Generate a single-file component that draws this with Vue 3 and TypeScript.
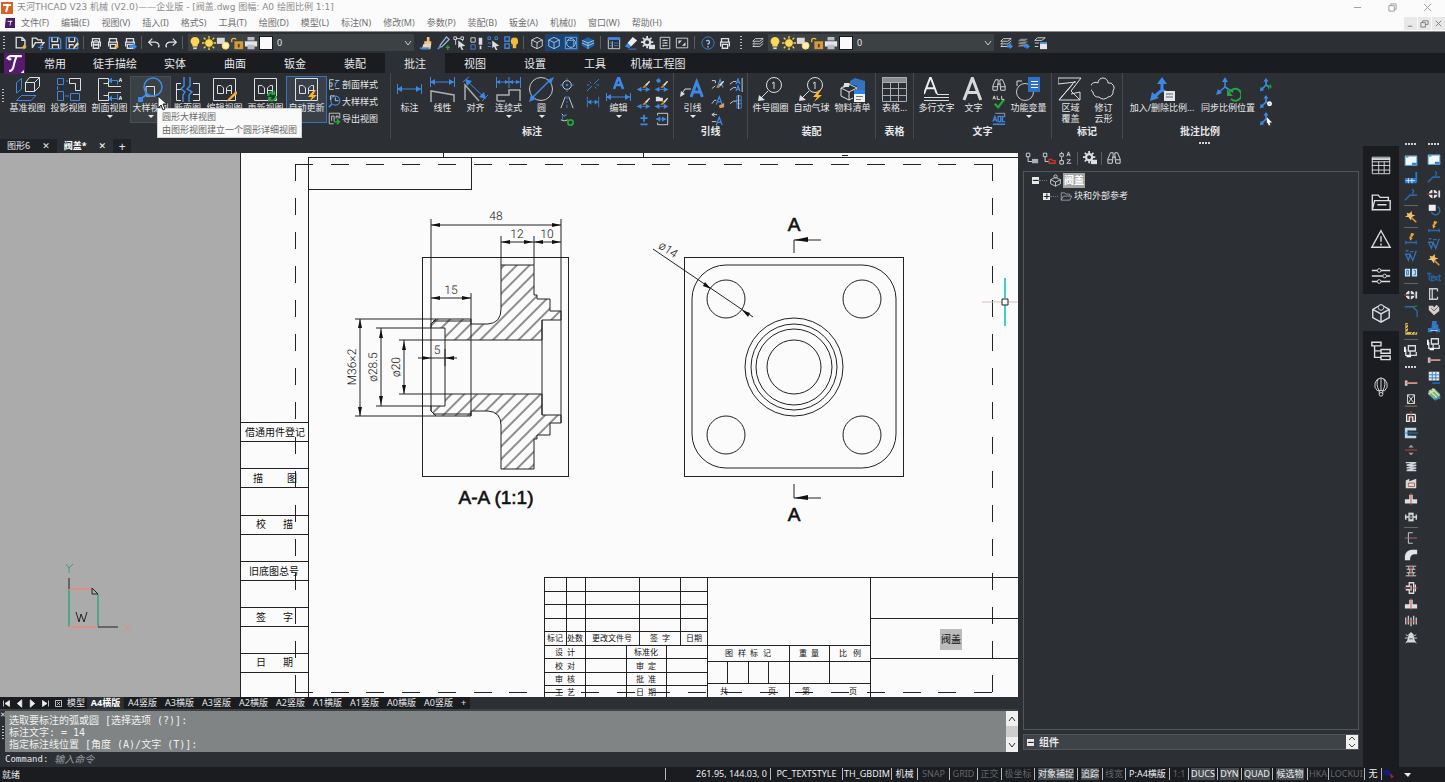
<script setup lang="ts">
import { ref } from 'vue'

const W = '#dcdfe2'
const B = '#3d88e4'
const Y = '#f5b83a'
const G = '#22a838'
const R = '#c8493c'

const ln = (d: string, c = W, w = 1): string =>
  `<path d="${d}" fill="none" stroke="${c}" stroke-width="${w}"/>`
const fl = (d: string, c = W): string => `<path d="${d}" fill="${c}"/>`
const ci = (x: number, y: number, r: number, c = W, f = 'none', w = 1): string =>
  `<circle cx="${x}" cy="${y}" r="${r}" stroke="${c}" fill="${f}" stroke-width="${w}"/>`

const bolt = fl('M20 13L14 20H18L15 25L23 18H19L22 13Z', '#fbb62c')
const harrow = (y: number, a: number, b: number): string =>
  ln(`M${a} ${y}H${b}`, B, 1) + fl(`M${a} ${y}l5 -3v6zM${b} ${y}l-5 -3v6z`, B)
const letterA = (x: number, y: number, s: number, c = B, w = 1.5): string =>
  ln(`M${x} ${y + s}L${x + s * 0.38} ${y}L${x + s * 0.76} ${y + s}M${x + s * 0.14} ${y + s * 0.66}H${x + s * 0.62}`, c, w)
const brush = fl('M9 8L14 3L15 4L11 9Z', '#f0dcc0') + fl('M9 8L11 9L9 11H6Z', '#e08a28')
const sheet = ln('M1.500 1.500H23.500V23.500H1.500Z') + ln('M5.500 16.500V8.500H9L11.500 11V16.500ZM14.500 17V11L17 8.500H19.500V17M14.500 13.500H19.500')
const layers = ln('M5 3H14L10 6H2ZM4 7.500L2 9H10L14 5.500M4 10.500L2 12H10L14 8.500', W)
const printer = ln('M4 7V3H12V7M3 12V7H13V12M5 9.500H11V14H5Z', W, 1.500)
const cube = ln('M8 1.500L14 4.500V11.500L8 14.500L2 11.500V4.500ZM2 4.500L8 7.500L14 4.500M8 7.500V14.500')
const scale = (c = B): string => ln('M8 3V8L3 13M8 8L12 10', c, 2) + fl('M8 0L11 4H5ZM1 15L2 10L6 14Z', c)

const big: Record<string, string> = {
  base: ln('M10.500 5.500L14.500 .500H24.500V9.500L19.500 14.500H10.500ZM10.500 5.500H19.500V14.500M19.500 5.500L24.500 .500') + ln('M6.500 1.500V12L1.500 16V5.500ZM6.500 18.500H21L16 23.500H1.500Z', B),
  proj: ln('M13.500 1.500H24.500V13.500H19.500V6.500H13.500Z') + ln('M1.500 1.500H7.500V7.500H1.500ZM1.500 14.500H7.500V23.500H1.500ZM14.500 16.500H23.500V23.500H14.500Z', B) + ln('M1.500 9V13M10 4H12M9 19H13', B),
  sect: ln('M1.500 1.500V23.500H11.500V18.500H6.500M1.500 1.500H11.500V6.500M6.500 6.500H11.500V9.500H24M11.500 18.500V15.500H24') + ln('M14 3.500H20.500V7.500M20.500 23V17M14 21.500H20.500', B) + fl('M11 3.500l4 -3v6zM11 21.500l4 -3v6z', B) + letterA(22, 1, 4, W, 1) + letterA(22, 19, 4, W, 1),
  detail: ln('M8 9.500H16.500V19M8 9.500V19H17') + ci(15, 10, 9, B, 'none', 1.5) + ln('M9 17L3 22', B, 2) + fl('M0 20H5V25H0Z', B),
  brk: ln('M6 6.500H1.500V23.500H6M18 6.500H24.500V23.500H18M1.500 12.500H6M18 17.500H24') + ln('M9 0V9L6 12L10 15L8 18V25M15 0V9L12 12L17 15L14 18V25', B, 1.500),
  edit: sheet + fl('M24 14L16 22L14 25L18 23L26 16Z', '#f3ad35'),
  refresh: sheet + ln('M15 19A4 4 0 0 1 22 17M23 19A4 4 0 0 1 16 22', G, 2) + fl('M22 13V18H18ZM15 25V20H19Z', G),
  auto: sheet + bolt,
  dim: harrow(12, 0, 24) + ln('M.5 7V17M24.500 7V17', B),
  linear: harrow(5, 0, 24) + ln('M.5 0V10M24.500 0V10', B) + ln('M1 25V14L24 18V25', '#a9adb2', 1.500),
  align: ln('M2 23V8L16 24', '#a9adb2', 1.500) + ln('M3 3L22 21M0 5L6 0M19 24L25 18', B) + fl('M2 2L9 4L4 9ZM23 22L16 20L21 15Z', B),
  chain: ln('M.5 0V11M13 0V11M24.500 0V11M0 5H24', B) + fl('M0 5l4 -2v4zM24 5l-4 -2v4zM13 5l-4 -2v4zM13 5l4 -2v4z', B) + ln('M1 24V18H13V13H24V24M1 24H9', '#a9adb2', 1.500),
  circle: ci(12, 12, 11.500, '#c6c9cc') + ln('M3 21L21 3', B, 1.500) + fl('M25 0L22 7L18 3ZM0 25L2 18L7 22Z', B),
  textdim: letterA(8, 0, 12, B, 2.500) + harrow(20, 0, 24) + ln('M.5 16V24M24.500 16V24', B),
  leader: letterA(11, 5, 15, B, 3) + ln('M1 18L5 12H11') + fl('M0 20L1 14L5 17Z'),
  balloon: ci(16, 8, 7.500) + ln('M10 14L3 21M14 6.500L16 5V12') + fl('M0 24L1 18L7 23Z'),
  aballoon: ci(16, 8, 7.500) + ln('M10 14L3 21M14 6.500L16 5V12') + fl('M0 24L1 18L7 23Z') + bolt,
  bom: ln('M1 11L9 7L17 11L9 15ZM1 11V19L9 23V15M17 11V15M9 23L13 21') + ln('M4 8V11M9 6V9') + fl('M10 4L15 1L25 4V13L17 14V9L10 7Z', '#3574bd') + fl('M4 6h5v4h-5z') + fl('M14 15H25V25H14Z', '#f1f1f1') + fl('M14 13H25V17H14Z', '#2b84e0') + ln('M16 19.500H23M16 22.500H21', '#777'),
  table: fl('M0 0H25V5H0Z', '#8b8d90') + ln('M.5 .5H24.500V24.500H.5ZM0 5.500H25M0 11.500H25M0 18.500H25M8.500 5V24M16.500 5V24', '#a9adb2'),
  mtext: letterA(0, 0, 17, '#eee', 2) + ln('M13 17.500H25M0 20.500H25M0 23.500H25'),
  text: letterA(3, 1, 22, '#d6d8da', 3),
  vari: ci(9, 15, 8.500, '#c6c9cc') + ln('M1 9V4H6') + fl('M12 0H24V15H12Z', '#2d72c6') + ln('M15 4.500H22M15 7.500H22M15 10.500H22', '#fff'),
  wipe: ln('M0 1H23L13 14L22 23H1L17 4M0 1V7L18 5M1 23L15 7M22 23V15L13 17'),
  cloud: ln('M7 6A5 5 0 0 1 17 6A5 5 0 0 1 22 14A5 5 0 0 1 17 20A6 6 0 0 1 8 20A5 5 0 0 1 2 15A5 5 0 0 1 7 6Z'),
  addscale: ln('M12 4V13L4 20M12 13L16 15', B, 3) + fl('M12 0L17 7H7ZM0 24L2 15L9 21Z', B) + fl('M14 14H25V24H14Z', '#e4e6e8') + ln('M16 17H23M16 20H23', '#55657a'),
  syncscale: ln('M9 2V10L2 16M9 10L17 15', B, 1.500) + fl('M9 0L12 5H6ZM0 18L2 12L6 16Z', B) + ln('M14 15A6 6 0 1 1 15 22', G, 2) + fl('M11 12V19H17Z', G),
}

const small: Record<string, string> = {
  new: ln('M9 1.500H2.500V13.500H12.500V7M9 1.500L12.500 5V7M9 1.500V5H12', W, 1.500) + fl('M13 8L9 13H12L10 16L15 12H13Z', Y),
  open: ln('M1.500 13.500V2.500H6L8 4.500H12V7M1.500 13.500L5 7.500H15L12 11', W, 1.500) + ln('M8 13H14M11 10V16', B, 1.500),
  save: ln('M1.500 1.500H12L14.500 4V14.500H1.500Z', B, 1.500) + ln('M4.500 2V6.500H11V2M5 14V10H12V14', W, 1.500),
  saveas: ln('M1.500 1.500H12L14.500 4V14.500H1.500Z', B, 1.500) + ln('M4.500 2V6.500H11V2M5 14V10H10', W, 1.500) + fl('M14 7L16 9L11 14L9 15L10 12Z', '#f6d9a6'),
  print1: printer + ci(8, 8, 3),
  print2: printer + fl('M13 8L9 13H12L10 16L15 12H13Z', Y),
  print3: printer + fl('M7 10H12V8L16 12L12 16V13H7Z', B),
  undo: ln('M6 3L2 7L6 11M2 7H9A5 4 0 0 1 13 13', W, 1.500),
  redo: ln('M10 3L14 7L10 11M14 7H7A5 4 0 0 0 3 13', W, 1.500),
  bulb: fl('M8 1A5 5 0 0 1 11 10V12H5V10A5 5 0 0 1 8 1Z', '#ffd558') + fl('M6 13H10V15H6Z', '#ddd'),
  sun: ci(8, 8, 4, '#ffcf3e', '#ffd95c') + ln('M8 0V3M8 13V16M0 8H3M13 8H16M2 2L4 4M12 12L14 14M14 2L12 4M2 14L4 12', '#ffcf3e', 1.500),
  freeze: fl('M1 2H10V9H1Z', '#d8dadd') + ci(11, 11, 4, '#ffd558', '#fff0b8'),
  lock: ln('M2 7V4A3 3 0 0 1 7 4', Y, 1.500) + fl('M5 6H15V15H5Z', '#d69a3a') + fl('M9 9h2v4h-2z', '#5b3b10'),
  plot: fl('M1 6H15V12H1Z', '#e3e5e8') + fl('M4 1H12V5H4ZM4 10H12V15H4Z', '#b9bec4'),
  brushy: fl('M9 1H12V6H14V9H6V6H9Z', '#f0c58a') + fl('M5 9H14L13 15H3Z', '#e8d7bd') + ln('M1 14H12', B, 2),
  pick: ln('M12 1L15 4L7 12L4 13L5 10Z', '#9cb7d6', 1.500) + ln('M2 15L5 12', B, 2) + ln('M11 13H16M13.500 10.500V16', G, 1.500),
  sel1: ln('M1 1H4V4H1ZM9 1H12V4H9ZM4 3H9M3 4V10M11 4V6') + fl('M6 5L14 11L10 12L12 16L10 16L8 12L6 14Z'),
  sel2: ln('M1 2H6V7H1Z') + ln('M1 10H6V15H1Z', B) + fl('M10 2H14V10H10ZM11 11H13V15H11Z'),
  sel3: ln('M1 1H4V4H1ZM9 1H12V4H9Z', B) + fl('M6 5L14 11L10 12L12 16L10 16L8 12L6 14Z') + ln('M1 8H5M1 12H5', B),
  sel4: ln('M1 1H6V6H1ZM1 9H6V14H1Z', B, 1.500) + fl('M12 2A3 4 0 0 1 14 10V14H10V10A3 4 0 0 1 12 2Z', Y) + ln('M8 3H9M8 11H9', B),
  cube: cube,
  cubeB: ln('M8 1.500L14 4.500V11.500L8 14.500L2 11.500V4.500ZM2 4.500L8 7.500L14 4.500M8 7.500V14.500', '#a5cdf8'),
  ringB: ln('M1.500 1.500H14.500V14.500H1.500Z', '#72aef2') + ci(8, 8, 5, '#a5cdf8') + ln('M4 5H11V12', '#72aef2'),
  solid: fl('M8 1L15 5V11L8 15L1 11V5Z', '#1d62a8') + ln('M1 5L8 8L15 5M8 8V15M1 8L8 11L15 8', '#b8c6d5'),
  props: ln('M1.500 2.500H14.500V14.500H1.500ZM6 6V14') + ln('M1 3H15', B, 3) + ln('M3 8H5M3 11H5M8 8H13M8 11H13', B),
  eraser: fl('M10 1L15 5L8 12L4 8Z', '#e9edf2') + fl('M4 8L8 12L6 14L1 12Z', B) + ln('M5 15H14', B),
  gear: ci(7, 7, 3.500, W, 'none', 2.500) + ln('M7 0V3M7 11V14M0 7H3M11 7H14M2 2L4 4M10 10L12 12M12 2L10 4M2 12L4 10', W, 2) + fl('M9 10H16V15H9Z'),
  sliders: ln('M2.500 1.500H13.500V14.500H2.500ZM5 5H11M5 8H11M5 11H11M7 4V6M9 7V9M6 10V12'),
  screen: ln('M1.500 2.500H14.500V13.500H1.500Z') + fl('M4 5h4l-4 4zM12 11h-4l4 -4z'),
  help: ci(8, 8, 7, B) + ln('M6 6A2 2 0 1 1 8 9V10M8 11.500V13', '#9bc2ee', 1.500),
  printer: printer,
  layers: layers,
  layB: layers + fl('M9 10H12V8L16 12L12 15V13H9Z', B),
  layC: fl('M5 3H14L10 6H2ZM4 7L2 9H10L14 6ZM4 10L2 12H10L14 9Z', '#83888d') + fl('M9 10h3v-2l4 4l-4 3v-2h-3z', B),
  layD: ln('M5 2H14L10 5H2ZM2 8H7M2 12H6') + fl('M8 7H16V15H8Z', '#e5e7e9') + fl('M8 7H16V9H8Z', B),
  s1: ln('M7 2H2V14H7M2 6H5V10H2M9 3H14M9 13H14') + ln('M9 6V11M8 8L12 4', B, 1.500),
  s2: ci(9, 7, 5.500, B, 'none', 1.500) + ln('M5 11L1 15', B, 2) + ln('M9 3V7H13M3 6V1H8'),
  s3: ln('M1.500 1.500H14.500V8M1.500 1.500V14.500H7M4.500 11V5H7.500V11M10 8V5H12.500V8') + ln('M7 12H14M11 9L14 12L11 15', G, 2),
  center: ci(8, 8, 5) + ci(8, 8, 1, B, B) + ln('M8 0V4M8 12V16M0 8H4M12 8H16', B),
  angle: ln('M6 2L1 15M10 2L15 15') + ln('M8 1V5M8 7V9M8 11V15', B),
  addarc: ln('M2 2L5 5M1 9A8 8 0 0 0 9 9', W) + ln('M7 2V4H3V9', B) + ci(12, 12, 3, G, 'none', 2),
  breakd: ln('M1 15L7 9M9 7L15 1M4 4L6 6M10 10L12 12M1 8H4M12 8H15', B),
  jog: ln('M1.500 2V14M14.500 2V14M2 8H14', B) + fl('M2 8l4 -3v6zM14 8l-4 -3v6z', B),
  dimA: harrow(13, 0, 15) + brush,
  dimB: harrow(13, 0, 15) + brush + ci(4, 3, 2, B, B),
  dimC: harrow(13, 0, 15) + brush,
  dimD: harrow(13, 0, 15) + brush + fl('M1 2H5L6 3H9V7H1Z'),
  plusmin: ln('M8 3V11M4 7H12M4 14H12', B, 2),
  fitbox: ln('M3 4V1.500H14.500V14.500H3V12') + harrow(8, 1, 13),
  ldA: letterA(7, 2, 9) + ln('M1 3H5V6M1 12L5 9') + brush,
  ldB: ln('M1 7L5 4H8') + letterA(8, 1, 6) + letterA(8, 9, 6) + ln('M15 0V16M1 14L5 11H8'),
  ldC: letterA(6, 2, 9) + ln('M1 10L4 6H6') + fl('M9 12L15 9V14L10 15Z', '#d79a62'),
  ldD: ln('M9 1H14V15H9ZM9 6H14M9 10H14', B) + ln('M11 0V16M1 10L5 7H9'),
  ldE: letterA(6, 6, 9) + ln('M1 3H7M4 1L1 3L4 5M1 11H6'),
  find: ln('M4 2H7V5L6 14H1V9ZM12 2H9V5L10 14H15V9ZM6 7H10M1 10H6M10 10H15', '#e5e7e9'),
  check: ln('M3 10L7 14L14 5', G, 2.500) + letterA(1, 1, 4, W, 1) + ln('M6 1V5H9M11 1V5H14'),
  abc: ln('M4 1.500H14.500V6', '#a9adb2') + letterA(1, 5, 6, B, 1.500) + ln('M7 5V11H10V5ZM15 5H12V11H15M1 14H15', B, 1.500),
  scA: scale() + ln('M11 8V13M13 7V12M9 10H15', G),
  scB: scale() + ci(12, 10, 2, '#fff', '#9cc8ff', 1.500),
  scC: scale() + fl('M9 6L15 12H12L13 15L11 15L10 12L9 13Z', '#fff'),
  treeA: ln('M1.500 2.500H5.500V6.500H1.500ZM3.500 6.500V12H8') + fl('M8 9H15V14H8Z', '#aab0b5'),
  treeB: ln('M1.500 2.500H5.500V6.500H1.500ZM3.500 6.500V12H8') + ln('M8 9.500H11L12 11H15V14H8Z', '#d03329', 1.500),
  sortaz: letterA(9, 1, 5, W, 1) + ln('M9 10H13L9 14H14M3 1V3H1V6H5V3H3M3 7V11M1 11H5V15H1Z'),
  folder: ln('M1.500 12.500V3.500H6L7 5H12V7M1.500 12.500L4 7.500H14.500L12 12.500Z', '#a8acb0'),
  block: ln('M8 4L14 7V12L8 15L2 12V7ZM2 7L8 10L14 7M8 10V15') + ci(8, 3, 2),
}

const rail: Record<string, string> = {
  table: ln('M2.500 3.500H21.500V21.500H2.500ZM2 8.500H22M2 12.500H22M2 17.500H22M9.500 8V21M15.500 8V21') + ln('M2 5.500H22', W, 2),
  folder: ln('M2.500 20.500V4.500H9L11 7H20V10M2.500 20.500L5 10.500H22V20.500ZM8 15H18', W, 1.500),
  warn: ln('M12 3L22 21H2ZM12 9V15M12 17V19', W, 1.500),
  slide: ln('M2 6H8M12 6H22M2 12H14M18 12H22M2 18H8M12 18H22', W, 1.500) + ci(10, 6, 2) + ci(16, 12, 2) + ci(10, 18, 2),
  cube: ln('M12 3L21 8V17L12 22L3 17V8ZM3 8L12 13L21 8M12 13V22', W, 1.500) + ci(12, 6, 3, W, '#26292d'),
  tree: ln('M2 3.500H12V7.500H2ZM12 11.500H22V15.500H12ZM12 18.500H22V22.500H12ZM5 8V20H12M5 13H12', W, 1.500),
  hot: ln('M12 2A8 8 0 0 1 16 16H8A8 8 0 0 1 12 2ZM9 3Q6 9 10 16M15 3Q18 9 14 16M12 2V16M10 16V19M14 16V19', W) + ci(12, 20, 2),
}

const tool: Record<string, string> = {
  frame: fl('M1 2H15V13H1Z', '#f4f8fc') + fl('M2 2H5V4H2ZM9 10H15V13H9Z', '#3085d0') + ln('M1.500 2.500H14.500V13H1.500Z', '#5aa7e8'),
  bars: fl('M1 8H14V14H1Z', '#2d78c8') + ln('M2 11H13M5 8V14M9 8V14', '#d5e9ff') + ln('M14 1V13', '#2d78c8', 2),
  ray: ln('M1 14L7 8H15', '#2868b0', 2) + ln('M9 2A2 2 0 1 1 9 6', '#2868b0', 1.500),
  wand: fl('M3 3L6 4L9 1L9 5L13 6L9 8L8 12L5 8L1 8L4 6Z', '#f2c36a') + ln('M9 9L14 14', '#d8903d', 2),
  spark: fl('M8 1L12 2L9 6H7ZM6 5L10 7L7 10Z', '#f0a53a') + ln('M2 12H14M2 10V14M14 10V14', '#2868b0', 1.500),
  tri: ln('M1 6H7L5 13L2 6M7 6L10 13L14 2M2 2H5M7 3H11', '#3570b0', 1.500),
  pair: fl('M1 3H7V12H1ZM9 3H15V12H9Z', '#bfe1fa') + ln('M3 5V10H5V5ZM11 5H13V10H11', '#216eb8'),
  target: ci(7, 8, 4, '#e9e9e9', '#d8d0d0', 2) + ln('M7 2V14M1 8H12', '#22262b', 1.500) + ln('M0 8H5', R) + ln('M14 4V12', W, 2),
  corner: ln('M1 2H10L15 7V14', '#2b6caf', 1.500) + ln('M10 2L15 1', G),
  hatch: ln('M3 1V13H15', '#d7bb59', 3) + ln('M2 4L5 2M2 8L5 6M2 12L5 10M8 14L10 11M12 14L14 11', '#222'),
  cycle: ln('M5 2H13V8H5ZM7 8V13H14V9M2 6V13H7', W, 1.500) + ln('M1 3V9M3 14H8', '#fff', 2),
  bolt: fl('M1 5H4V11H1ZM4 7H15V9H4Z', '#d2c9c9') + ln('M2 8H16', R),
  cross: ln('M4 2H12V12H4ZM4 2L12 12M12 2L4 12', '#e7e7e7') + ln('M1 15H15', '#b57a58'),
  pin: ln('M3 5H13M3 5V13H6V8H10V13H13V5', '#e8e8e8', 1.500) + ln('M8 1V15', R),
  joint: fl('M1 2H14V5H7V11H14V14H1Z', '#b8d8f0') + fl('M4 5H7V11H4Z', '#1d3448') + ln('M0 8H16', '#3f7fae'),
  mid: fl('M8 2L11 5H5ZM8 14L11 11H5Z', '#9ca0a4') + ln('M1 8H15', R),
  spring: ln('M2 3H14L3 6H14L3 9H14L3 12H14', '#cfd5db', 1.500),
  part: fl('M2 5L6 3V6L14 3V14H2Z', '#dad9d4') + ln('M5 8H12V12H5Z', '#b05d51'),
  cap: fl('M6 2H10V7H15V12H1V7H6Z', '#dedede') + ln('M8 0V14', R),
  nut: fl('M5 3H11V13H5Z', '#d8d8d8') + ln('M1 8H15M2 5V11M14 5V11', W, 1.500) + ln('M7 6H9V10H7Z', '#222'),
  ent: ln('M10 2H5V14H10', W) + ln('M1 8H15', '#be7167'),
  elbow: fl('M1 14V9A8 8 0 0 1 9 2H15V7H12A5 5 0 0 0 7 12V14Z', '#e3e4e6'),
  ibeam: ln('M2 2.500H14M2 13.500H14M5.500 3V6L7 8L5.500 10V13M10.500 3V6L9 8L10.500 10V13M3 6H13M3 10H13', W) + ln('M8 1V15', R),
  clamp: ln('M2 6H6V2H11V14H6V10H2M8 5V11M13 4V12', W, 1.500) + ln('M0 8H16', R),
  bug: fl('M8 1L11 4V6L13 13H3L5 6V4Z', '#d8d8d8') + ln('M1 8H5M11 8H15M2 14L4 11M14 14L12 11M2 4L5 6M14 4L11 6', W) + ln('M6 9H10', '#444'),
  coil: ln('M2 4V12M5 2V12M8 4V14M11 2V12M14 4V12', '#c9c9c9', 1.500) + ln('M2 8H14', R),
  text: ln('M0 4H5M2.500 4V12M5 9H8V7H5V12H8M9 7L12 12M12 7L9 12M14 5V12H16M13 7H16', '#2763a5', 1.500),
  book: ln('M12 2H3V14H12M6 2V14M12 2V5M12 14V11', '#c9ccd0', 1.500),
  heart: fl('M2 3H7L8 5L11 2L14 5V9L8 14L2 8Z', '#d5d0d0') + ln('M5 6L8 9L12 5', '#7b3a34'),
  robot: fl('M6 1H11V5H13V10H15V14H10V11H6V14H1V9H5Z', '#3378c7') + ln('M4 12H12', '#bad7f4'),
  grid: fl('M2 2H14V12H2Z', '#dfeaf5') + ln('M2 5.500H14M2 9H14M6 2V12M10 2V12', '#3378b8') + ln('M6 15H15', '#1a63b4', 2),
  globe: fl('M2 4L8 1L15 8V13L9 15L1 8Z', '#5fb3a3') + ln('M3 4L12 13M6 2L14 10M2 8L9 3', '#f1e08a', 1.500) + ln('M9 15L15 11', '#3a78c8', 2),
  circ: fl('M2 2H10V9H2Z', '#eee') + ln('M5 10A5 5 0 1 0 12 4', '#386fab', 1.500),
}

const menus = ['文件(F)', '编辑(E)', '视图(V)', '插入(I)', '格式S)', '工具(T)', '绘图(D)', '模型(L)', '标注(N)', '修改(M)', '参数(P)', '装配(B)', '钣金(A)', '机械(J)', '窗口(W)', '帮助(H)']
const quickA = ['new', 'open', 'save', 'saveas', '|', 'print1', 'print2', 'print3', '|', 'undo', 'redo', '|']
const quickB = ['brushy', 'pick', 'sel1', 'sel2', 'sel3', 'sel4', '|', 'cube', 'cubeB', 'ringB', 'solid', '|', 'props', 'eraser', 'gear', 'sliders', 'screen', '|', 'help', 'printer']
const quickC = ['layB', 'layC', 'layD']
const layerIcons = ['bulb', 'sun', 'freeze', 'lock', 'plot']
const tabs = ['常用', '徒手描绘', '实体', '曲面', '钣金', '装配', '批注', '视图', '设置', '工具', '机械工程图']
const activeTab = ref('批注')

interface Item { kind: 'big' | 'col' | 'gap'; icon?: string; label?: string[]; size?: string; more?: boolean; icons?: string[] }
interface Group { title: string; items: Item[] }
const bigItem = (icon: string, label: string, size = 'm', more = false): Item => ({ kind: 'big', icon, label: label.split('|'), size, more })
const col = (...icons: string[]): Item => ({ kind: 'col', icons })

const viewItems: Item[] = [
  bigItem('base', '基准视图', 'l'), bigItem('proj', '投影视图', 'l'), bigItem('sect', '剖面视图', 'l', true),
  bigItem('detail', '大样视图', 'l', true), bigItem('brk', '断面图'), bigItem('edit', '编辑视图', 'l'),
  bigItem('refresh', '更新视图', 'l'), bigItem('auto', '自动更新', 'l'),
]
const viewStyles = [['s1', '剖面样式'], ['s2', '大样样式'], ['s3', '导出视图']]
const groups: Group[] = [
  { title: '标注', items: [bigItem('dim', '标注'), bigItem('linear', '线性'), bigItem('align', '对齐'), bigItem('chain', '连续式', 'm', true), bigItem('circle', '圆', 'm', true), col('center', 'angle', 'addarc'), { kind: 'gap' }, col('breakd', 'jog'), bigItem('textdim', '编辑', 'm', true), col('dimA', 'dimC', 'plusmin'), col('dimB', 'dimD', 'fitbox')] },
  { title: '引线', items: [bigItem('leader', '引线', 'm', true), col('ldA', 'ldC', 'ldE'), col('ldB', 'ldD')] },
  { title: '装配', items: [bigItem('balloon', '件号圆圈', 'l'), bigItem('aballoon', '自动气球', 'l'), bigItem('bom', '物料清单', 'l')] },
  { title: '表格', items: [bigItem('table', '表格...')] },
  { title: '文字', items: [bigItem('mtext', '多行文字', 'l'), bigItem('text', '文字'), col('find', 'check', 'abc'), bigItem('vari', '功能变量', 'l', true)] },
  { title: '标记', items: [bigItem('wipe', '区域|覆盖'), bigItem('cloud', '修订|云形')] },
  { title: '批注比例', items: [bigItem('addscale', '加入/删除比例...', 'xl'), bigItem('syncscale', '同步比例位置', 'xm'), col('scA', 'scB', 'scC')] },
]

const layouts = ['模型', 'A4横版', 'A4竖版', 'A3横版', 'A3竖版', 'A2横版', 'A2竖版', 'A1横版', 'A1竖版', 'A0横版', 'A0竖版']
const activeLayout = ref('A4横版')
const layoutNav = [['第一个', 'M2 2V10M10 2L4 6L10 10Z'], ['上一个', 'M9 1L3 6L9 11Z'], ['下一个', 'M3 1L9 6L3 11Z'], ['最后一个', 'M10 2V10M2 2L8 6L2 10Z'], ['列表', 'M2 2H10V10H2ZM4 4L8 8M8 4L4 8']]
const command = ref('')

const railIcons = ['table', 'folder', 'warn', 'slide', 'cube', 'tree', 'hot']
const toolsA = [['frame', 'bars', 'ray'], ['wand'], ['spark', 'tri', 'pair'], ['target', 'corner', 'hatch'], ['cycle']]
const toolsA2 = ['bolt', 'cross', 'pin', 'joint', 'mid', 'spring', 'part', 'cap', 'nut']
const toolsA3 = ['ent', 'elbow', 'ibeam', 'clamp', 'cap', 'coil', 'bug']
const toolsB = ['frame', 'ray', 'target', 'circ', 'spark', 'tri', 'wand', 'text', 'book', 'heart', 'robot', 'cycle', 'bolt', 'grid', 'globe']

const status: [string, string][] = [
  ['261.95, 144.03, 0', 'bright end'], ['PC_TEXTSTYLE', 'bright'], ['TH_GBDIM', 'bright'], ['机械', 'bright'], ['SNAP', ''], ['GRID', ''], ['正交', ''], ['极坐标', ''],
  ['对象捕捉', 'hot'], ['追踪', 'hot'], ['线宽', ''], ['P:A4横版', 'bright'], ['1:1', ''], ['DUCS', 'hot'], ['DYN', 'hot'], ['QUAD', 'hot'], ['候选物', 'hot'], ['HKA', ''], ['LOCKUI', ''], ['无', 'bright'],
]

interface Label { x: number; y: number; t: string }
const L = (x: number, y: number, t: string): Label => ({ x, y, t })
const sideLabels: Label[] = [
  L(275, 436, '借通用件登记'), L(258, 482, '描'), L(292, 482, '图'), L(261, 528, '校'), L(288, 528, '描'),
  L(274, 575, '旧底图总号'), L(261, 621, '签'), L(288, 621, '字'), L(261, 666, '日'), L(288, 666, '期'),
]
const blockLabels: Label[] = [
  L(555, 641, '标记'), L(575, 641, '处数'), L(612, 641, '更改文件号'), L(654, 641, '签'), L(666, 641, '字'), L(694, 641, '日期'),
  L(559, 655, '设'), L(571, 655, '计'), L(559, 669, '校'), L(571, 669, '对'), L(559, 682, '审'), L(571, 682, '核'), L(559, 695, '工'), L(571, 695, '艺'),
  L(646, 655, '标准化'), L(640, 669, '审'), L(652, 669, '定'), L(640, 682, '批'), L(652, 682, '准'), L(640, 695, '日'), L(652, 695, '期'),
  L(729, 656, '图'), L(742, 656, '样'), L(754, 656, '标'), L(767, 656, '记'), L(803, 656, '重'), L(815, 656, '量'), L(843, 656, '比'), L(857, 656, '例'),
  L(724, 694, '共'), L(772, 694, '页'), L(806, 694, '第'), L(853, 694, '页'),
]
const dimLabels: Label[] = [L(496, 220, '48'), L(517, 238, '12'), L(547, 238, '10'), L(451, 294, '15'), L(437, 354, '5')]
const vertLabels: Label[] = [L(356, 367, 'M36×2'), L(377, 367, 'ø28.5'), L(400, 367, 'ø20')]
const holes = [[726, 299], [862, 299], [726, 435], [862, 435]]
const rings = [27, 38, 43, 49]
const dashes = [['M295 692V164', 31], ['M992 692V164', 31], ['M295 692H992', 39], ['M295 164H992', 39]]

const arrowHead = (x: number, y: number, dir: string): string =>
  ({ l: `M${x} ${y}l9 -2v4z`, r: `M${x} ${y}l-9 -2v4z`, u: `M${x} ${y}l-2 9h4z`, d: `M${x} ${y}l-2 -9h4z` })[dir] ?? ''
const arrows = [
  [431, 225, 'l'], [561, 225, 'r'], [501, 242, 'l'], [533, 242, 'r'], [534, 242, 'l'], [561, 242, 'r'], [431, 298, 'l'], [471, 298, 'r'],
  [431, 358, 'r'], [445, 358, 'l'], [360, 319, 'u'], [360, 416, 'd'], [381, 329, 'u'], [381, 405, 'd'], [404, 341, 'u'], [404, 394, 'd'],
].map(([x, y, d]) => arrowHead(x as number, y as number, d as string)).join('')
const hatchArea = 'M431 324L436 319H471V324H488Q501 323 501 309V265H534V295H537V299H550V311H561V320H542V340H445V328H431ZM431 411L436 416H471V411H488Q501 412 501 425V469H534V439H537V435H550V423H561V415H542V394H445V406H431Z'
</script>

<template>
  <div class="app">
    <header class="title">
      <svg class="logo" viewBox="0 0 12 12"><path d="M0 0H12V12H0Z" fill="#d9622b" /><path d="M2 3H10M7 3L5 10" stroke="#fff" stroke-width="2" fill="none" /></svg>
      <h1>天河THCAD V23 机械 (V2.0)——企业版 - [阀盖.dwg 图幅: A0 绘图比例 1:1]</h1>
      <button aria-label="最小化"><svg viewBox="0 0 10 10"><path d="M1 5H9" /></svg></button>
      <button aria-label="还原"><svg viewBox="0 0 10 10"><path d="M1 3H7V9H1ZM3 3V1H9V7H7" /></svg></button>
      <button aria-label="关闭"><svg viewBox="0 0 10 10"><path d="M1 1L9 9M9 1L1 9" /></svg></button>
    </header>
    <nav class="menu">
      <svg class="logo" viewBox="0 0 12 12"><path d="M1 0H12V12H0V9Z" fill="#4b1d63" /><path d="M3 4H9M7 3L6 9" stroke="#fff" fill="none" /></svg>
      <button v-for="m in menus" :key="m">{{ m }}</button>
      <span class="fill"></span>
      <button class="mdi" aria-label="最小化文档"><svg viewBox="0 0 10 10"><path d="M2 8H7" /></svg></button>
      <button class="mdi" aria-label="还原文档"><svg viewBox="0 0 10 10"><path d="M1 4H6V9H1ZM3 4V2H9V6H6" /></svg></button>
      <button class="mdi" aria-label="关闭文档"><svg viewBox="0 0 10 10"><path d="M2 2L8 8M8 2L2 8" /></svg></button>
    </nav>

    <div class="quick">
      <span class="grip"></span>
      <template v-for="(q, i) in quickA" :key="'a' + i">
        <i v-if="q === '|'" class="sep"></i>
        <button v-else :aria-label="q"><svg viewBox="0 0 16 16" v-html="small[q]"></svg></button>
      </template>
      <div class="combo">
        <svg v-for="c in layerIcons" :key="c" viewBox="0 0 16 16" v-html="small[c]"></svg>
        <i class="swatch"></i>
        <select aria-label="图层"><option>0</option></select>
        <svg class="chev" viewBox="0 0 8 8"><path d="M1 2L4 6L7 2" fill="none" stroke="#ccc" /></svg>
      </div>
      <template v-for="(q, i) in quickB" :key="'b' + i">
        <i v-if="q === '|'" class="sep wide"></i>
        <button v-else :class="{ lit: q === 'cubeB' || q === 'ringB' }" :aria-label="q"><svg viewBox="0 0 16 16" v-html="small[q]"></svg></button>
      </template>
      <span class="grip mid"></span>
      <button aria-label="图层管理"><svg viewBox="0 0 16 16" v-html="small.layers"></svg></button>
      <div class="combo">
        <svg v-for="c in layerIcons" :key="c" viewBox="0 0 16 16" v-html="small[c]"></svg>
        <i class="swatch"></i>
        <select aria-label="当前图层"><option>0</option></select>
        <svg class="chev" viewBox="0 0 8 8"><path d="M1 2L4 6L7 2" fill="none" stroke="#ccc" /></svg>
      </div>
      <button v-for="q in quickC" :key="q" :aria-label="q"><svg viewBox="0 0 16 16" v-html="small[q]"></svg></button>
    </div>

    <div class="tabs">
      <button class="brand" aria-label="应用菜单">
        <svg viewBox="0 0 20 20"><path d="M0 0H20V20H0Z" fill="#561a6e" /><path d="M3 6Q4 2 9 3L17 3M12 3Q10 8 9 13Q8 17 5 17M4 6H7" fill="none" stroke="#fff" stroke-width="2" /><path d="M19 16V19H16Z" fill="#fff" /></svg>
      </button>
      <button v-for="t in tabs" :key="t" class="tab" :class="{ active: t === activeTab }" @click="activeTab = t">{{ t }}</button>
    </div>

    <div class="ribbon">
      <span class="grip tall"></span>
      <section class="group first">
        <div class="items">
          <button v-for="v in viewItems" :key="v.icon" class="big" :class="[v.size, { hover: v.icon === 'detail', picked: v.icon === 'auto' }]">
            <svg viewBox="0 0 25 25" v-html="big[v.icon!]"></svg>
            <span v-for="l in v.label" :key="l">{{ l }}</span>
            <i v-if="v.more" class="more"></i>
          </button>
          <div class="styles">
            <button v-for="s in viewStyles" :key="s[0]"><svg viewBox="0 0 16 16" v-html="small[s[0]]"></svg>{{ s[1] }}</button>
          </div>
        </div>
      </section>
      <section v-for="g in groups" :key="g.title" class="group">
        <div class="items">
          <template v-for="(it, i) in g.items" :key="i">
            <button v-if="it.kind === 'big'" class="big" :class="it.size">
              <svg viewBox="0 0 25 25" v-html="big[it.icon!]"></svg>
              <span v-for="l in it.label" :key="l">{{ l }}</span>
              <i v-if="it.more" class="more"></i>
            </button>
            <div v-else-if="it.kind === 'col'" class="col">
              <button v-for="c in it.icons" :key="c" :aria-label="c"><svg viewBox="0 0 16 16" v-html="small[c]"></svg></button>
            </div>
            <i v-else class="gap"></i>
          </template>
        </div>
        <h2>{{ g.title }}</h2>
      </section>
      <div class="tip" role="tooltip"><p>圆形大样视图</p><p>由图形视图建立一个圆形详细视图</p></div>
      <svg class="cursor" viewBox="0 0 10 16"><path d="M1 1V13L4 10L6 15L8 14L6 9H10Z" fill="#fff" stroke="#222" /></svg>
    </div>

    <div class="body">
      <main class="work">
        <div class="docs">
          <button class="doc">图形6 <b>✕</b></button>
          <button class="doc active">阀盖* <b>✕</b></button>
          <button class="add" aria-label="新建图形">+</button>
        </div>
        <div class="canvas">
          <svg viewBox="0 153 1018 544" preserveAspectRatio="xMinYMin slice">
            <defs>
              <pattern id="hatch" width="9" height="9" patternUnits="userSpaceOnUse" patternTransform="rotate(45)"><path d="M4 0V9" stroke="#222" /></pattern>
            </defs>
            <path d="M241 153H1018V698H241Z" fill="#fbfbfb" />
            <g class="line" shape-rendering="crispEdges">
              <path d="M240 153V698M308 157V698M308 157H1018M308 189H471V157M443 153V157M643 153V157M842 155H848" />
              <path d="M241 422H308M241 441H308M241 468H308M241 487H308M241 515H308M241 534H308M241 561H308M241 580H308M241 607H308M241 626H308M241 653H308M241 672H308" />
              <path d="M544 577H1018M544 591H707M544 604H707M544 618H707M544 631H707M544 645H870M544 658H707M544 672H707M544 685H707M544 577V698M566 577V645M585 577V698M639 577V645M680 577V645M707 577V698M626 645V698M666 645V698" />
              <path d="M707 661H870M707 683H870M727 661V683M748 661V683M768 661V683M789 645V698M829 645V683M870 577V698M870 618H1018M870 658H1018" />
              <path d="M422 257H568V476H422ZM684 257H903V476H684Z" />
              <path v-for="d in dashes" :key="d[0]" :d="String(d[0])" :pathLength="d[1]" stroke-dasharray="1 1" />
            </g>

            <path :d="hatchArea" fill="url(#hatch)" />
            <g class="line">
              <path :d="hatchArea" />
              <path d="M471 319V416M431 219V411M433 321H471M433 414H471M542 320V415M561 219V423M399 340H445M399 394H445M445 340V394M376 328H431M376 406H431M355 319H436M355 416H436" />
              <path d="M431 225H561M501 236V265M534 236V265M501 242H561M431 298H471M471 293V319M360 319V416M381 328V406M404 340V394M418 358H457M445 349V366" />
            </g>
            <path :d="arrows" fill="#111" />
            <g class="dim">
              <text v-for="d in dimLabels" :key="d.t" :x="d.x" :y="d.y">{{ d.t }}</text>
              <text v-for="d in vertLabels" :key="d.t" :x="d.x" :y="d.y" :transform="`rotate(-90 ${d.x} ${d.y})`">{{ d.t }}</text>
              <text x="666" y="253" transform="rotate(34 666 253)">ø14</text>
            </g>
            <g class="line">
              <rect x="692" y="265" width="204" height="203" rx="34" />
              <circle v-for="(h, i) in holes" :key="i" :cx="h[0]" :cy="h[1]" r="19" />
              <circle v-for="r in rings" :key="r" cx="794" cy="367" :r="r" />
              <path d="M653 249L753 317M794 253V240H821M794 484V498H821" />
            </g>
            <path d="M794 240L808 237V242ZM794 498L808 495V500ZM711 289L703 286L705 282ZM742 310L750 313L748 317Z" fill="#111" />
            <g class="view">
              <text x="496" y="504">A-A (1:1)</text>
              <text x="794" y="231">A</text>
              <text x="794" y="521">A</text>
            </g>
            <g class="cjk side"><text v-for="(s, i) in sideLabels" :key="i" :x="s.x" :y="s.y">{{ s.t }}</text></g>
            <g class="cjk cell"><text v-for="(s, i) in blockLabels" :key="i" :x="s.x" :y="s.y">{{ s.t }}</text></g>
            <path d="M940 629H962V650H940Z" fill="#bcbcbc" />
            <g class="cjk side"><text x="951" y="643">阀盖</text></g>

            <path d="M982 302H1002M1008 302H1018" stroke="#d9bfb4" />
            <path d="M1005 278V298M1005 305V326" stroke="#3fd0c4" stroke-width="2" />
            <path d="M1002 299H1008V305H1002Z" fill="none" stroke="#222" />

            <g fill="none">
              <path d="M69 589V627M98 594V627" stroke="#4fa68a" stroke-width="2" />
              <path d="M66 564L69 568L73 564M69 568V573" stroke="#3f9e80" />
              <path d="M69 589H92M69 627H98" stroke="#e08f86" stroke-width="2" />
              <path d="M124 625L131 631M131 625L124 631" stroke="#e08f86" />
              <path d="M69 578V589M98 627H118M92 588V594H98ZM76 612L79 622L81 614L84 622L87 612" stroke="#222" />
            </g>
          </svg>
        </div>
        <div class="layouts">
          <button v-for="n in layoutNav" :key="n[0]" class="nav" :aria-label="n[0]"><svg viewBox="0 0 12 12"><path :d="n[1]" :fill="n[0] === '列表' ? 'none' : '#eee'" stroke="#eee" /></svg></button>
          <button v-for="l in layouts" :key="l" class="lay" :class="{ active: l === activeLayout }" @click="activeLayout = l">{{ l }}</button>
          <button class="nav" aria-label="新建布局">+</button>
        </div>
        <div class="history">
          <div class="handle"><b>✕</b><span class="grip"></span></div>
          <pre>选取要标注的弧或圆 [选择选项 (?)]:
标注文字: = 14
指定标注线位置 [角度 (A)/文字 (T)]:</pre>
          <div class="scroll">
            <button aria-label="向上"><svg viewBox="0 0 8 8"><path d="M1 6L4 2L7 6" /></svg></button>
            <i></i>
            <button aria-label="向下"><svg viewBox="0 0 8 8"><path d="M1 2L4 6L7 2" /></svg></button>
          </div>
        </div>
        <label class="prompt">Command: <input v-model="command" placeholder="输入命令" /></label>
      </main>

      <aside class="panel">
        <span class="dots shift"></span>
        <div class="ptools">
          <button aria-label="展开"><svg viewBox="0 0 16 16" v-html="small.treeA"></svg></button>
          <button aria-label="折叠"><svg viewBox="0 0 16 16" v-html="small.treeB"></svg></button>
          <button aria-label="排序"><svg viewBox="0 0 16 16" v-html="small.sortaz"></svg></button>
          <i class="sep"></i>
          <button aria-label="选项"><svg viewBox="0 0 16 16" v-html="small.gear"></svg></button>
          <i class="sep"></i>
          <button aria-label="查找"><svg viewBox="0 0 16 16" v-html="small.find"></svg></button>
        </div>
        <ul class="tree">
          <li><i class="exp">−</i><i class="dash"></i><svg viewBox="0 0 16 16" v-html="small.block"></svg><b>阀盖</b></li>
          <li class="child"><i class="exp">+</i><i class="dash"></i><svg viewBox="0 0 16 16" v-html="small.folder"></svg><span>块和外部参考</span></li>
        </ul>
        <div class="parts"><i class="exp">−</i><b>组件</b><button aria-label="展开组件"><svg viewBox="0 0 12 14"><path d="M3 5L6 2L9 5M3 9L6 12L9 9" fill="none" stroke="#444" stroke-width="1" /></svg></button></div>
      </aside>

      <nav class="rail">
        <button v-for="r in railIcons" :key="r" :class="{ active: r === 'cube' }" :aria-label="r"><svg viewBox="0 0 24 24" v-html="rail[r]"></svg></button>
      </nav>

      <div class="tools">
        <span class="dots"></span>
        <template v-for="(s, i) in toolsA" :key="i">
          <i v-if="i" class="hsep"></i>
          <button v-for="t in s" :key="t" :aria-label="t"><svg viewBox="0 0 16 16" v-html="tool[t]"></svg></button>
        </template>
        <span class="dots second"></span>
        <div class="stack nine"><button v-for="t in toolsA2" :key="t" :aria-label="t"><svg viewBox="0 0 16 16" v-html="tool[t]"></svg></button></div>
        <i class="hsep"></i>
        <div class="stack seven"><button v-for="t in toolsA3" :key="t" :aria-label="t"><svg viewBox="0 0 16 16" v-html="tool[t]"></svg></button></div>
      </div>
      <div class="tools">
        <span class="dots"></span>
        <div class="stack fifteen"><button v-for="(t, i) in toolsB" :key="i" :aria-label="t"><svg viewBox="0 0 16 16" v-html="tool[t]"></svg></button></div>
      </div>
    </div>

    <footer class="status">
      <span class="ready">就绪</span>
      <div class="cells">
        <span v-for="s in status" :key="s[0]" :class="s[1]"><em>{{ s[0] }}</em></span>
        <span class="tray">
          <svg viewBox="0 0 14 12"><path d="M1 3Q5 0 8 3V9L5 7Q2 8 1 3Z" fill="#141a80" /><path d="M8 5L12 9L9 10Z" fill="#a8281c" /></svg>
          <svg viewBox="0 0 14 12"><path d="M4 5H11L8 9Z" fill="#eee" /></svg>
        </span>
      </div>
    </footer>
  </div>
</template>

<style>
html, body { margin: 0; height: 100%; background: #2c2f33; }
</style>

<style scoped>
.app { display: flex; flex-direction: column; height: 100vh; min-height: 600px; overflow: hidden; background: #2c2f33; color: #e6e8ea; font: 9px/12px "Noto Sans", "Noto Sans CJK SC", sans-serif; }
button, select, input { font: inherit; color: inherit; background: none; border: 0; padding: 0; margin: 0; white-space: nowrap; }
i, em { font-style: normal; }
svg { display: block; flex: none; }
h1, h2, p, pre, ul { margin: 0; padding: 0; }
.fill { flex: 1; }

.title { display: flex; align-items: center; height: 15px; background: #fbfbfb; color: #8c8c8c; }
.title .logo { width: 12px; height: 12px; margin: 0 4px 0 1px; }
.title h1 { flex: 1; font: 400 9px/15px "DejaVu Sans", "Noto Sans CJK SC", sans-serif; white-space: nowrap; }
.title button { width: 35px; height: 15px; display: flex; justify-content: center; align-items: center; }
.title button svg, .mdi svg { width: 9px; height: 9px; fill: none; stroke: #999; }
.menu { display: flex; align-items: center; gap: 12px; height: 16px; background: #fbfbfb; color: #707070; border-bottom: 1px solid #8b8d8f; }
.menu .logo { width: 10px; height: 12px; margin-left: 5px; margin-right: -6px; }
.menu .mdi { width: 13px; height: 13px; background: #e8e8e8; display: flex; align-items: center; justify-content: center; margin-left: -11px; }
.menu .mdi svg { stroke: #777; }

.quick { display: flex; align-items: center; height: 21px; flex: none; }
.quick > button { width: 17px; height: 17px; display: flex; align-items: center; justify-content: center; }
.quick > button svg { width: 14px; height: 14px; }
.quick > .lit { background: #1c4470; }
.grip { width: 2px; height: 13px; margin: 0 7px 0 3px; background: repeating-linear-gradient(#b9bcc0 0 1px, transparent 1px 3px); }
.grip.mid { margin: 0 7px; }
.grip.tall { height: 14px; margin: 16px 3px 0 2px; }
.sep { width: 1px; height: 13px; margin: 0 3px; background: #585d62; }
.sep.wide { margin: 0 4px; }
.combo { display: flex; align-items: center; width: 226px; height: 17px; margin: 0 3px 0 2px; background: #3c4144; }
.combo svg { width: 14px; height: 14px; }
.combo .swatch { width: 12px; height: 12px; margin: 0 5px 0 2px; background: #fafafa; outline: 1px solid #15171a; }
.combo select { flex: 1; min-width: 0; appearance: none; font-size: 9px; }
.combo .chev { width: 8px; height: 8px; margin-right: 2px; }

.tabs { display: flex; height: 20px; flex: none; background: #1a1c20; }
.brand { width: 21px; height: 20px; margin-left: 4px; }
.tab { width: 60px; font-size: 11px; line-height: 19px; }
.tab.active { background: #2c2f33; }
.tab:last-child { width: 66px; }

.ribbon { position: relative; display: flex; height: 66px; flex: none; }
.group { display: flex; flex-direction: column; padding: 0 2px; border-right: 1px solid #464b50; }
.group.first { padding: 0 12px 0 0; }
.group:nth-last-of-type(1) { border-right: 0; }
.items { display: flex; height: 51px; align-items: flex-start; }
.group h2 { font-size: 10px; line-height: 14px; text-align: center; font-weight: 700; }
.big { display: flex; flex-direction: column; align-items: center; width: 33px; height: 47px; margin-top: 3px; padding-top: 1px; }
.big.l { width: 41px; }
.big.xl { width: 74px; }
.big.xm { width: 58px; }
.big svg { width: 25px; height: 25px; }
.big span { line-height: 11px; }
.more { margin-top: 2px; border: 3px solid transparent; border-top-color: #e6e8ea; border-bottom: 0; }
.hover { background: #3b4044; box-shadow: inset 0 0 0 1px #4a4f53; }
.picked { background: #39404a; box-shadow: inset 0 0 0 1px #3574bd; }
.col { display: flex; flex-direction: column; width: 18px; padding-top: 3px; }
.col button { height: 17px; display: flex; align-items: center; justify-content: center; }
.col svg { width: 14px; height: 14px; }
.gap { width: 8px; }
.styles { display: flex; flex-direction: column; padding: 3px 0 0 1px; }
.styles button { display: flex; align-items: center; gap: 1px; height: 17px; }
.styles svg { width: 13px; height: 13px; }
.tip { position: absolute; z-index: 2; left: 157px; top: 35px; padding: 1px 4px; background: #fafafa; border: 1px solid #d0d0d0; color: #666; line-height: 13px; white-space: nowrap; }
.cursor { position: absolute; z-index: 3; left: 157px; top: 22px; width: 10px; height: 16px; }

.body { display: flex; flex: 1; min-height: 0; }
.work { display: flex; flex-direction: column; flex: 1; min-width: 0; }
.docs { display: flex; height: 14px; flex: none; }
.doc { display: flex; align-items: center; gap: 12px; padding: 0 7px; background: #1f2226; }
.doc.active { background: #2c2f33; font-weight: 700; color: #fff; }
.doc b { font: 9px/12px "DejaVu Sans", sans-serif; }
.add { width: 18px; background: #1f2226; font-size: 12px; line-height: 13px; }
.canvas { flex: 1; min-height: 0; background: #ababab; overflow: hidden; }
.canvas svg { width: 100%; height: 100%; }
.line { fill: none; stroke: #222; }
.dim { font: 300 12px Roboto, sans-serif; fill: #111; text-anchor: middle; text-rendering: geometricPrecision; }
.view { font: 19px "Liberation Sans", Arial, sans-serif; fill: #111; stroke: #111; stroke-width: .6; text-anchor: middle; }
.cjk { font-family: "Noto Sans CJK SC", sans-serif; fill: #111; text-anchor: middle; }
.side { font-size: 10px; }
.cell { font-size: 8px; }

.layouts { display: flex; height: 12px; flex: none; background: linear-gradient(90deg, #1a1c20 470px, #2c2f33 470px); border-bottom: 2px solid #3c4246; }
.nav { width: 13px; display: flex; align-items: center; justify-content: center; line-height: 12px; }
.nav svg { width: 9px; height: 9px; }
.lay { width: 37px; line-height: 12px; }
.lay:nth-child(6) { width: 22px; }
.lay.active { font-weight: 700; color: #fff; background: #2c2f33; }
.history { display: flex; height: 41px; flex: none; }
.handle { width: 5px; overflow: hidden; display: flex; flex-direction: column; gap: 6px; }
.handle b { font: 7px/9px "DejaVu Sans", sans-serif; }
.handle .grip { margin: 0 0 0 2px; }
.history pre { flex: 1; padding: 4px; background: #808484; color: #f0f0f0; font: 10px/12px "DejaVu Sans Mono", "Noto Sans CJK SC", monospace; overflow: hidden; }
.scroll { width: 12px; display: flex; flex-direction: column; background: #f0f0f0; }
.scroll button { height: 15px; padding: 0 2px; }
.scroll svg { width: 8px; height: 8px; fill: none; stroke: #333; }
.scroll i { flex: 1; background: #cdcdcd; }
.prompt { display: flex; align-items: center; gap: 6px; height: 15px; flex: none; padding-left: 5px; font: 9px/15px "DejaVu Sans Mono", monospace; }
.prompt input { flex: 1; outline: 0; font: 10px/14px "DejaVu Sans Mono", "Noto Sans CJK SC", monospace; }
.prompt input::placeholder { color: #9a9ea2; font-style: italic; opacity: 1; }

.panel { display: flex; flex-direction: column; width: 345px; flex: none; padding-bottom: 17px; box-sizing: border-box; }
.dots { height: 2px; width: 12px; flex: none; margin: 4px auto 7px; background: repeating-linear-gradient(90deg, #d0d3d6 0 2px, transparent 2px 3px); }
.dots.shift { margin: 3px 0 2px 181px; }
.ptools { display: flex; align-items: center; height: 24px; padding-left: 5px; }
.ptools button { width: 17px; }
.ptools svg { width: 14px; height: 14px; margin: 0 auto; }
.tree { flex: 1; margin: 1px 4px 4px 5px; border: 1px solid #50565a; list-style: none; }
.tree li { display: flex; align-items: center; height: 16px; padding-left: 8px; }
.tree .child { padding-left: 19px; }
.tree svg { width: 13px; height: 13px; }
.exp { width: 7px; height: 7px; font: 700 9px/7px "DejaVu Sans", sans-serif; text-align: center; background: #e8e8e8; color: #222; }
.dash { width: 8px; border-top: 1px dotted #70757a; margin-right: 2px; }
.tree b { padding: 1px 1px 2px; margin-left: 1px; background: #a3a3a3; color: #fff; font-size: 10px; }
.tree span { margin-left: 1px; }
.parts { display: flex; align-items: center; gap: 5px; height: 14px; margin: 0 4px 0 5px; padding-left: 3px; border: 1px solid #50565a; background: #3d4346; }
.parts b { flex: 1; font-size: 10px; }
.parts button { background: #f0f0f0; }
.parts svg { width: 12px; height: 14px; }

.rail { width: 36px; flex: none; margin-top: 7px; background: #1a1c20; }
.rail button { display: flex; align-items: center; justify-content: center; width: 36px; height: 37px; }
.rail .active { background: #2c2f33; }
.rail svg { width: 22px; height: 22px; }

.tools { display: flex; flex-direction: column; align-items: center; width: 23px; flex: none; }
.tools button { display: flex; align-items: center; justify-content: center; width: 18px; height: 17px; }
.tools svg { width: 14px; height: 14px; }
.hsep { width: 14px; height: 1px; margin: 2px 0; background: #62676c; flex: none; }
.dots.second { margin: 7px auto; }
.stack { display: grid; grid-auto-rows: 1fr; flex: none; }
.stack button { height: auto; min-height: 0; overflow: hidden; }
.nine { height: 150px; }
.seven { height: 116px; }
.fifteen { height: 250px; }

.status { display: flex; height: 15px; flex: none; background: #1a1c20; font-size: 10px; }
.ready { flex: 1; padding-left: 2px; font-size: 9px; line-height: 15px; }
.cells { display: grid; grid-template-columns: 105px 72px 49px 26px 32px 28px 24px 33px 43px 25px 23px 44px 19px 29px 24px 31px 35px 21px 36px 17px 64px; }
.cells span { display: flex; align-items: center; justify-content: center; border-left: 1px solid #b6b9bc; height: 12px; margin-top: 1px; color: #62676c; font-size: 9px; white-space: nowrap; overflow: hidden; }
.cells .bright { color: #eceef0; }
.cells .end { justify-content: flex-end; padding-right: 3px; }
.cells .hot em { background: #454a4e; color: #eceef0; }
.cells .tray { justify-content: flex-start; gap: 4px; }
.tray svg { width: 14px; height: 12px; }
</style>
